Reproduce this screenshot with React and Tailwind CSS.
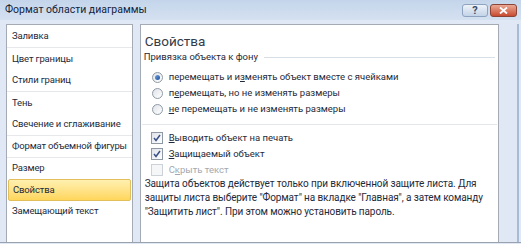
import React from "react";

function Radio({ checked }) {
  return (
    <span className="relative w-[11px] h-[11px] rounded-full border border-[#8f99a6] bg-gradient-to-br from-[#dfe3e8] to-[#ffffff] flex items-center justify-center shrink-0">
      {checked && (
        <span className="w-[5px] h-[5px] rounded-full bg-gradient-to-br from-[#6fa2e0] to-[#1c4f9c]" />
      )}
    </span>
  );
}

function Check({ checked, disabled }) {
  return (
    <span
      className={
        "w-[12px] h-[12px] border flex items-center justify-center shrink-0 " +
        (disabled
          ? "border-[#cdd2d8] bg-[#f5f6f7]"
          : "border-[#8f99a6] bg-gradient-to-br from-[#dfe3e8] to-[#ffffff]")
      }
    >
      {checked && (
        <svg width="10" height="10" viewBox="0 0 10 10">
          <path d="M2 5 L4 7.5 L8 2" fill="none" stroke="#3a5088" strokeWidth="1.5" />
        </svg>
      )}
    </span>
  );
}

function NavItem({ label, h, selected }) {
  if (selected) {
    return (
      <div className={"mx-px rounded-[2px] border border-[#e2bf5a] bg-gradient-to-b from-[#fff0b0] to-[#ffd65a] flex items-center pl-[4px] text-[#1e2a3a] whitespace-nowrap tracking-[-0.15px] " + h}>
        {label}
      </div>
    );
  }
  return <div className={"flex items-center pl-[5px] text-[#1e2a3a] whitespace-nowrap tracking-[-0.15px] " + h}>{label}</div>;
}

function Sep({ cls }) {
  return <div className={"h-px bg-[#e6e8eb] " + (cls || "")} />;
}

export default function App() {
  return (
    <div className="w-[521px] h-[244px] overflow-hidden bg-[#dfe8f4] flex flex-col [font-family:'Segoe_UI',Roboto,sans-serif] text-[9.5px]">
      <div className="h-[20px] shrink-0 bg-gradient-to-b from-[#c4d5eb] to-[#d4e1f1] flex items-start justify-between pl-[5px] pr-[4px]">
        <div className="h-[19px] flex items-center text-[10.5px] text-[#15233a]">Формат области диаграммы</div>
        <div className="flex gap-[2px] pt-[4px]">
          <div className="w-[26px] h-[13px] rounded-[3px] border border-[#8ea3bf] bg-gradient-to-b from-[#eef3f9] to-[#c3d3e8] flex items-center justify-center text-[11px] leading-none font-bold text-[#3c4b62]">?</div>
          <div className="w-[27px] h-[13px] rounded-[3px] border border-[#8c4436] bg-gradient-to-b from-[#e9a894] to-[#c74a2f] flex items-center justify-center">
            <svg width="9" height="7" viewBox="0 0 9 7">
              <path d="M1 0.5 L8 6.5 M8 0.5 L1 6.5" stroke="#ffffff" strokeWidth="1.8" />
            </svg>
          </div>
        </div>
      </div>
      <div className="flex-1 flex pt-[4px] pl-[6px] pr-[2px] gap-[7px] min-h-0">
        <div className="w-[130px] bg-white border border-b-0 border-[#a4abb5] flex flex-col pt-px">
          <NavItem label="Заливка" h="h-[21px]" />
          <Sep cls="mb-px" />
          <NavItem label="Цвет границы" h="h-[21px]" />
          <NavItem label="Стили границ" h="h-[21px]" />
          <Sep cls="mb-px" />
          <NavItem label="Тень" h="h-[21px]" />
          <NavItem label="Свечение и сглаживание" h="h-[21px]" />
          <Sep />
          <NavItem label="Формат объемной фигуры" h="h-[21px]" />
          <Sep />
          <NavItem label="Размер" h="h-[21px]" />
          <NavItem label="Свойства" h="h-[22px]" selected />
          <NavItem label="Замещающий текст" h="h-[21px]" />
        </div>
        <div className="w-[369px] bg-white border border-b-0 border-[#a4abb5] flex flex-col text-[#1e2a3a]">
          <div className="pl-[4px] pt-[7px] h-[25px] text-[13.5px] leading-[18px] text-[#333c48]">Свойства</div>
          <div className="pl-[3px] pr-[3px] h-[14px] flex items-center">
            <span>Привязка объекта к фону</span>
            <span className="flex-1 h-px bg-[#d9dfe6] ml-[6px]" />
          </div>
          <div className="mt-[5px] pl-[11px] flex flex-col">
            <div className="h-[16px] flex items-center gap-[6px]">
              <Radio checked />
              <span>перемещать и и<u>з</u>менять объект вместе с ячейками</span>
            </div>
            <div className="h-[16px] flex items-center gap-[6px]">
              <Radio />
              <span>п<u>е</u>ремещать, но не изменять размеры</span>
            </div>
            <div className="h-[17px] flex items-center gap-[6px]">
              <Radio />
              <span><u>н</u>е перемещать и не изменять размеры</span>
            </div>
          </div>
          <div className="mt-[6px] mx-[1px] h-px bg-[#e3e7eb]" />
          <div className="mt-[5px] pl-[10px] flex flex-col">
            <div className="h-[16px] flex items-center gap-[6px]">
              <Check checked />
              <span><u>В</u>ыводить объект на печать</span>
            </div>
            <div className="h-[16px] flex items-center gap-[6px]">
              <Check checked />
              <span><u>З</u>ащищаемый объект</span>
            </div>
            <div className="h-[16px] flex items-center gap-[6px] text-[#a3a8ae]">
              <Check disabled />
              <span>С<u>к</u>рыть текст</span>
            </div>
          </div>
          <div className="pl-[4px] pr-[4px] leading-[14px] -mt-px whitespace-nowrap text-[10px] tracking-[-0.1px]">
            <div>Защита объектов действует только при включенной защите листа. Для</div>
            <div>защиты листа выберите "Формат" на вкладке "Главная", а затем команду</div>
            <div>"Защитить лист". При этом можно установить пароль.</div>
          </div>
        </div>
        <div className="w-[4px]" />
        <div className="w-[2px] bg-[#a9bbd3]" />
      </div>
      <div className="h-px bg-[#9aa3ad] shrink-0" />
      <div className="h-px bg-[#dfe8f4] shrink-0" />
    </div>
  );
}
